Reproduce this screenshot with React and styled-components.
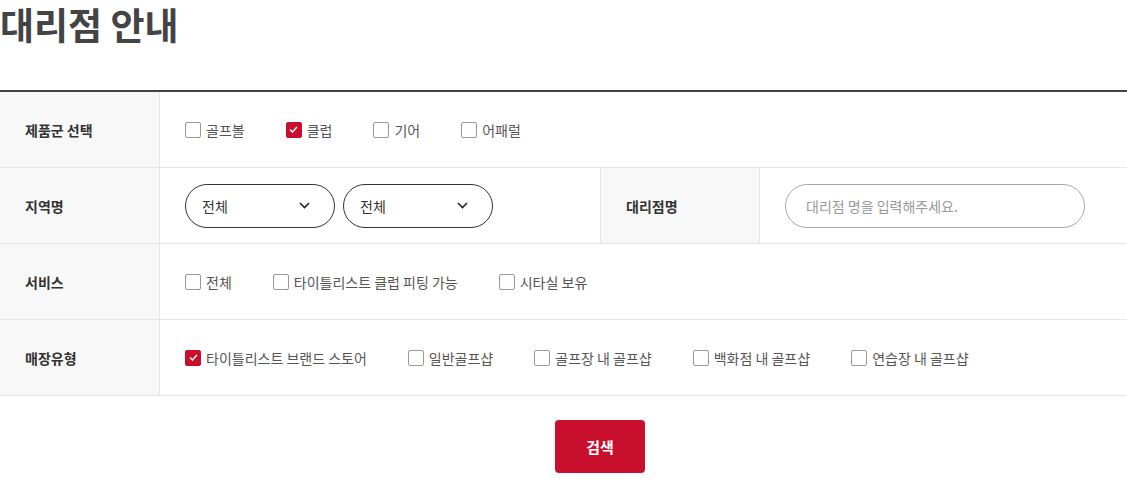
import React, { useState } from 'react';
import styled, { createGlobalStyle } from 'styled-components';

const GlobalStyle = createGlobalStyle`
  html, body {
    margin: 0;
    padding: 0;
    overflow: hidden;
    background: #fff;
  }
  body {
    font-family: "Noto Sans CJK KR", "Noto Sans", sans-serif;
    color: #333;
  }
`;

const Page = styled.div`
  width: 1200px;
`;

const Title = styled.h2`
  margin: 0;
  font-size: 37px;
  line-height: 48px;
  font-weight: 700;
  color: #444;
`;

const Table = styled.div`
  margin-top: 42px;
  border-top: 2px solid #444;
`;

const Row = styled.div`
  display: grid;
  grid-template-columns: ${(p) => (p.$split ? '160px 440px 160px 440px' : '160px 1fr')};
  height: 76px;
  border-bottom: 1px solid #e5e5e5;
  box-sizing: border-box;
`;

const Label = styled.div`
  display: flex;
  align-items: center;
  padding-left: 25px;
  background: #f8f8f8;
  border-right: 1px solid #e5e5e5;
  border-left: ${(p) => (p.$inner ? '1px solid #e5e5e5' : 'none')};
  font-size: 14px;
  font-weight: 700;
  color: #333;
`;

const Cell = styled.div`
  display: flex;
  align-items: center;
  padding-left: 25px;
  gap: ${(p) => p.$gap || 0}px;
`;

const CheckItem = styled.label`
  display: inline-flex;
  align-items: center;
  margin-right: 41px;
  font-size: 14px;
  color: #555;
  cursor: pointer;
  white-space: nowrap;
`;

const Box = styled.span`
  width: 16px;
  height: 16px;
  box-sizing: border-box;
  margin-right: 5px;
  border-radius: 2px;
  border: 1px solid ${(p) => (p.$on ? '#c8102e' : '#999')};
  background: ${(p) => (p.$on ? '#c8102e' : '#fff')};
  display: flex;
  align-items: center;
  justify-content: center;
`;

const SelectBox = styled.div`
  width: 150px;
  height: 44px;
  box-sizing: border-box;
  border: 1px solid #333;
  border-radius: 22px;
  display: flex;
  align-items: center;
  justify-content: space-between;
  padding: 0 24px 0 16px;
  font-size: 14px;
  color: #333;
`;

const SearchInput = styled.input`
  width: 300px;
  height: 44px;
  box-sizing: border-box;
  border: 1px solid #aaa;
  border-radius: 22px;
  padding: 0 20px;
  font-family: inherit;
  font-size: 14px;
  color: #333;
  outline: none;
  &::placeholder {
    color: #999;
  }
`;

const Actions = styled.div`
  display: flex;
  justify-content: center;
  padding-top: 24px;
`;

const SearchButton = styled.button`
  width: 90px;
  height: 53px;
  border: none;
  border-radius: 4px;
  background: #c8102e;
  color: #fff;
  font-family: inherit;
  font-size: 15px;
  font-weight: 700;
  cursor: pointer;
`;

const Check = ({ label, checked, onToggle }) => (
  <CheckItem onClick={onToggle}>
    <Box $on={checked}>
      {checked && (
        <svg width="9" height="7" viewBox="0 0 9 7">
          <path d="M1 3.6L3.4 6L8 1" fill="none" stroke="#fff" strokeWidth="1.4" />
        </svg>
      )}
    </Box>
    {label}
  </CheckItem>
);

const Chevron = () => (
  <svg width="11" height="7" viewBox="0 0 11 7">
    <path d="M1 1l4.5 4.5L10 1" fill="none" stroke="#222" strokeWidth="1.6" />
  </svg>
);

const CheckGroup = ({ items, value, onChange }) => (
  <Cell>
    {items.map((it) => (
      <Check
        key={it}
        label={it}
        checked={value.includes(it)}
        onToggle={(e) => {
          e.preventDefault();
          onChange(value.includes(it) ? value.filter((v) => v !== it) : [...value, it]);
        }}
      />
    ))}
  </Cell>
);

export default function App() {
  const [products, setProducts] = useState(['클럽']);
  const [services, setServices] = useState([]);
  const [types, setTypes] = useState(['타이틀리스트 브랜드 스토어']);

  return (
    <Page>
      <GlobalStyle />
      <Title>대리점 안내</Title>
      <Table>
        <Row>
          <Label>제품군 선택</Label>
          <CheckGroup items={['골프볼', '클럽', '기어', '어패럴']} value={products} onChange={setProducts} />
        </Row>
        <Row $split>
          <Label>지역명</Label>
          <Cell $gap={8}>
            <SelectBox>
              전체
              <Chevron />
            </SelectBox>
            <SelectBox>
              전체
              <Chevron />
            </SelectBox>
          </Cell>
          <Label $inner>대리점명</Label>
          <Cell>
            <SearchInput placeholder="대리점 명을 입력해주세요." />
          </Cell>
        </Row>
        <Row>
          <Label>서비스</Label>
          <CheckGroup
            items={['전체', '타이틀리스트 클럽 피팅 가능', '시타실 보유']}
            value={services}
            onChange={setServices}
          />
        </Row>
        <Row>
          <Label>매장유형</Label>
          <CheckGroup
            items={['타이틀리스트 브랜드 스토어', '일반골프샵', '골프장 내 골프샵', '백화점 내 골프샵', '연습장 내 골프샵']}
            value={types}
            onChange={setTypes}
          />
        </Row>
      </Table>
      <Actions>
        <SearchButton>검색</SearchButton>
      </Actions>
    </Page>
  );
}
